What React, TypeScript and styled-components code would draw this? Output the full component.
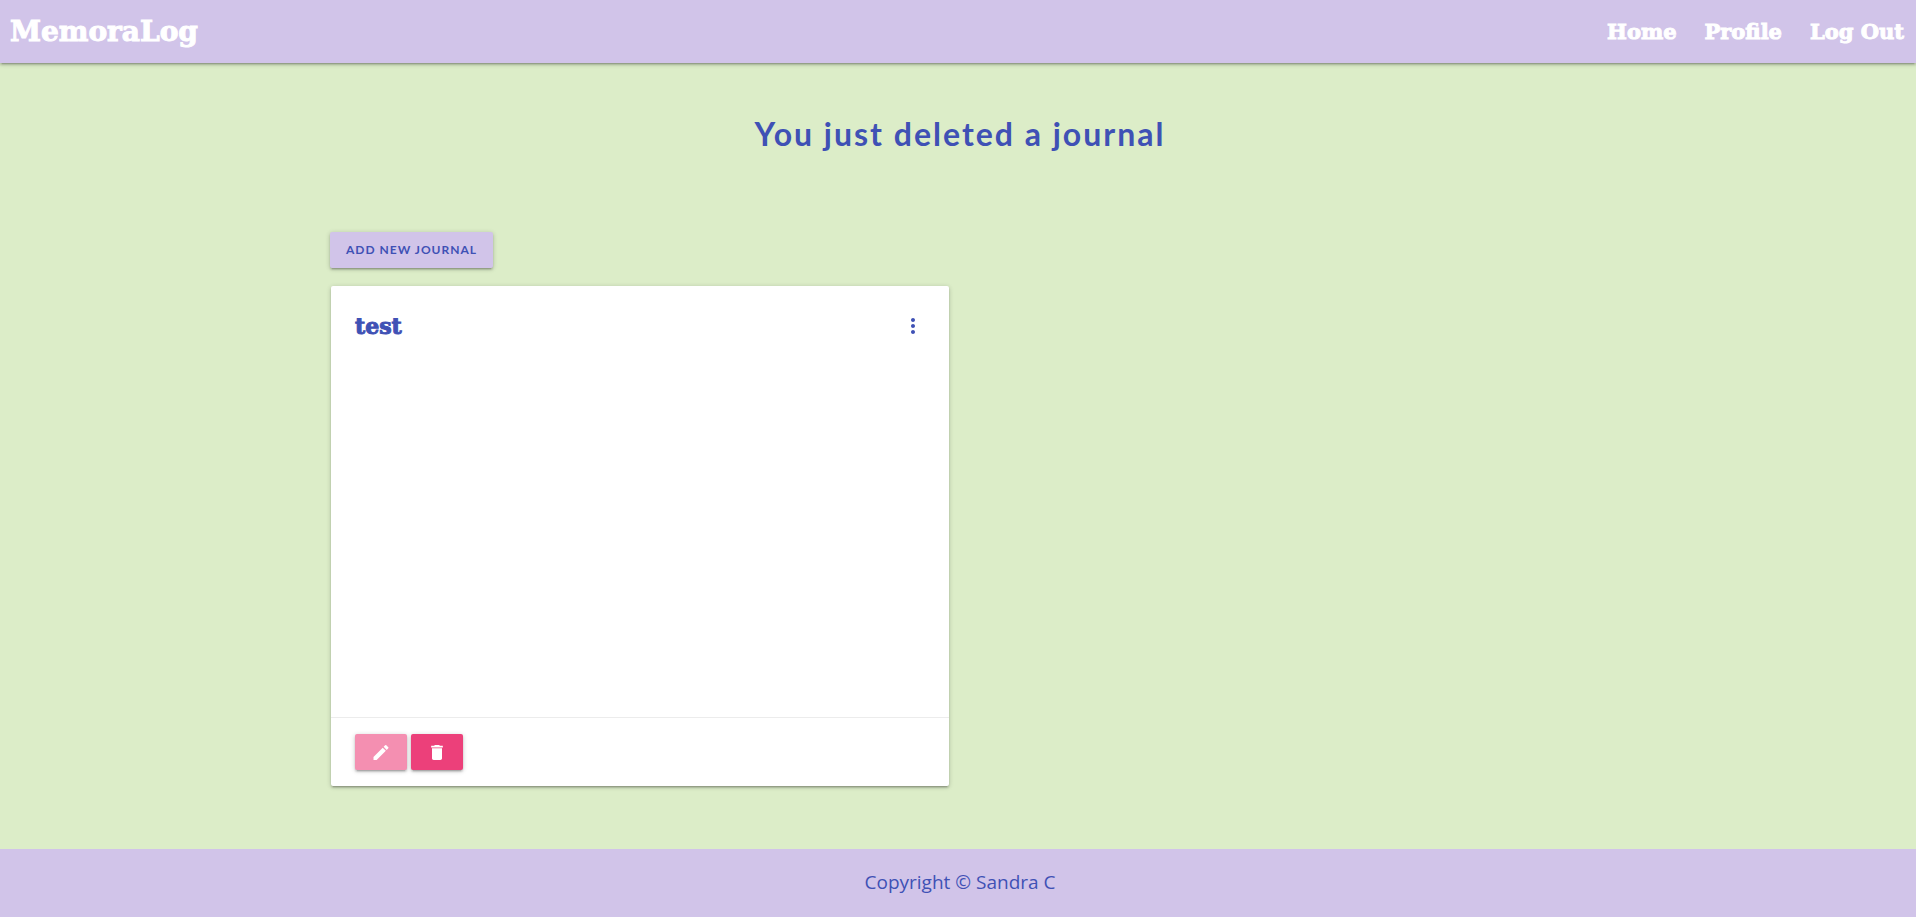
import React from "react";
import styled, { createGlobalStyle } from "styled-components";
import { MdDelete, MdEdit, MdMoreVert } from "react-icons/md";

const indigo = "#3f51b5";
const lilac = "#d1c4e9";
const display = `"DejaVu Serif", serif`;
const raised =
  "0 2px 2px 0 rgba(0,0,0,.14), 0 3px 1px -2px rgba(0,0,0,.12), 0 1px 5px 0 rgba(0,0,0,.2)";

const GlobalStyle = createGlobalStyle`
  *, *::before, *::after { box-sizing: border-box; }
  body {
    margin: 0;
    background: #dcedc8;
    color: ${indigo};
    font-family: "Noto Sans", sans-serif;
  }
`;

const Page = styled.div`
  display: flex;
  flex-direction: column;
  min-height: 100vh;
`;

const NavBar = styled.nav`
  display: flex;
  align-items: center;
  justify-content: space-between;
  height: 63px;
  padding: 0 12px 0 10px;
  background: ${lilac};
  box-shadow: ${raised};
`;

const NavLink = styled.a<{ $brand?: boolean }>`
  color: #fff;
  font-family: ${display};
  font-size: ${(p) => (p.$brand ? 28 : 21)}px;
  font-weight: 700;
  line-height: 63px;
  text-decoration: none;
  -webkit-text-stroke: 1px #fff;
`;

const NavLinks = styled.div`
  display: flex;
  gap: 28px;
`;

const Main = styled.main`
  flex: 1;
`;

const Notice = styled.h1`
  margin: 47px 0 74px;
  padding-left: 4px;
  font-family: Lato, sans-serif;
  font-size: 32px;
  font-weight: 700;
  line-height: 48px;
  letter-spacing: 2px;
  text-align: center;
`;

const Container = styled.section`
  display: flex;
  flex-direction: column;
  align-items: flex-start;
  width: 100%;
  max-width: 1280px;
  margin: 0 auto;
  padding: 0 12px;
`;

const Button = styled.button<{ $tone: string }>`
  display: inline-flex;
  align-items: center;
  justify-content: center;
  height: 36px;
  padding: 0 16px;
  border: 0;
  border-radius: 2px;
  background: ${(p) => p.$tone};
  box-shadow: ${raised};
  color: ${indigo};
  font-family: Lato, sans-serif;
  font-size: 12px;
  font-weight: 700;
  line-height: 36px;
  letter-spacing: 1px;
  text-transform: uppercase;
  cursor: pointer;
`;

const IconButton = styled(Button)`
  width: 52px;
  color: #fff;
`;

const JournalGrid = styled.div`
  display: grid;
  grid-template-columns: repeat(2, 1fr);
  gap: 18px;
  width: 100%;
  margin: 18px 0 63px;
  padding: 0 1px;
`;

const Card = styled.article`
  display: flex;
  flex-direction: column;
  min-height: 500px;
  border-radius: 2px;
  background: #fff;
  box-shadow: ${raised};
`;

const CardBody = styled.div`
  display: flex;
  flex: 1;
  align-items: flex-start;
  justify-content: space-between;
  padding: 24px;
`;

const CardTitle = styled.h2`
  margin: 0;
  font-family: ${display};
  font-size: 22px;
  font-weight: 700;
  line-height: 32px;
  -webkit-text-stroke: 1px ${indigo};
`;

const MenuButton = styled.button`
  display: flex;
  align-items: center;
  height: 32px;
  padding: 0;
  border: 0;
  background: none;
  color: ${indigo};
  cursor: pointer;
`;

const CardActions = styled.div`
  display: flex;
  gap: 4px;
  padding: 16px 24px;
  border-top: 1px solid rgba(160, 160, 160, 0.2);
`;

const Footer = styled.footer`
  padding: 18px 0 20px 4px;
  background: ${lilac};
  font-family: "Open Sans", sans-serif;
  font-size: 19px;
  font-weight: 400;
  line-height: 30px;
  text-align: center;
`;

export default function App() {
  return (
    <Page>
      <GlobalStyle />
      <NavBar>
        <NavLink $brand href="#home">MemoraLog</NavLink>
        <NavLinks>
          <NavLink href="#home">Home</NavLink>
          <NavLink href="#profile">Profile</NavLink>
          <NavLink href="#logout">Log Out</NavLink>
        </NavLinks>
      </NavBar>
      <Main>
        <Notice>You just deleted a journal</Notice>
        <Container>
          <Button $tone={lilac} type="button">Add new journal</Button>
          <JournalGrid>
            <Card>
              <CardBody>
                <CardTitle>test</CardTitle>
                <MenuButton type="button" aria-label="More about test">
                  <MdMoreVert size={24} />
                </MenuButton>
              </CardBody>
              <CardActions>
                <IconButton $tone="#f48fb1" type="button" aria-label="Edit journal">
                  <MdEdit size={21} />
                </IconButton>
                <IconButton $tone="#ec407a" type="button" aria-label="Delete journal">
                  <MdDelete size={21} />
                </IconButton>
              </CardActions>
            </Card>
          </JournalGrid>
        </Container>
      </Main>
      <Footer>Copyright © Sandra C</Footer>
    </Page>
  );
}
